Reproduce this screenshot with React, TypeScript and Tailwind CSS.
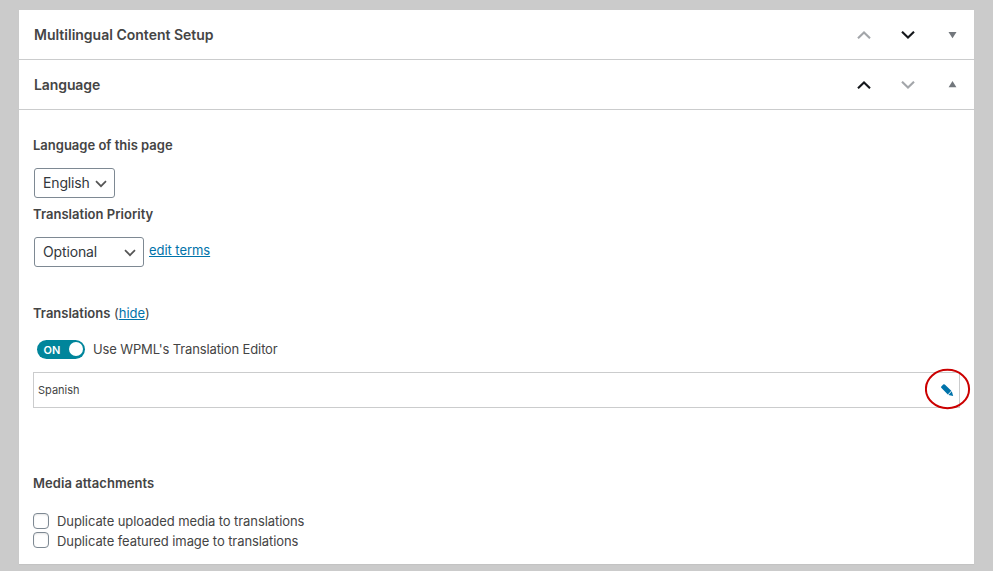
import type { ReactNode } from "react";

function Chevron({ up, active }: { up?: boolean; active?: boolean }) {
  return (
    <svg width="14" height="8" viewBox="0 0 14 8" fill="none" stroke={active ? "#15181c" : "#a3a6aa"} strokeWidth="2.1">
      <path d={up ? "M1 7.3 7 1.5l6 5.8" : "M1 0.7 7 6.5l6-5.8"} />
    </svg>
  );
}

function PanelHeader({ title, upActive, open }: { title: ReactNode; upActive?: boolean; open?: boolean }) {
  return (
    <div className="flex h-[50px] shrink-0 items-center border-b border-[#cbcccd] pl-[15px] pr-[17px]">
      <h2 className="flex-1 text-[14px] font-semibold leading-5 text-[#454545]">{title}</h2>
      <div className="flex items-center">
        <Chevron up active={upActive} />
        <span className="ml-[30px] flex">
          <Chevron active={!upActive} />
        </span>
        <svg className="ml-[33px]" width="9" height="8" viewBox="0 0 9 8" fill="#72777c">
          <path d={open ? "M4.5 0 8.4 6.2H0.6z" : "M0.5 1h8L4.5 7.2z"} />
        </svg>
      </div>
    </div>
  );
}

function Select({ label, className }: { label: string; className: string }) {
  return (
    <button
      className={`flex h-[30px] items-center justify-between rounded-[3px] border border-[#7e8993] bg-white pl-2 pr-[7px] text-[14px] leading-5 tracking-[-0.14px] text-[#32373c] ${className}`}
    >
      <span>{label}</span>
      <svg className="mt-px" width="12" height="8" viewBox="0 0 12 8" fill="none" stroke="#555" strokeWidth="1.7">
        <path d="M1 1.2 6 6.2l5-5" />
      </svg>
    </button>
  );
}

function CheckRow({ label, className }: { label: ReactNode; className: string }) {
  return (
    <label className="flex h-5 items-start">
      <span className={`size-4 shrink-0 rounded-[4px] border border-[#7e8993] bg-white shadow-[inset_0_1px_2px_rgba(0,0,0,0.1)] ${className}`} />
      <span className="ml-2 leading-5 tracking-[-0.08px]">{label}</span>
    </label>
  );
}

export default function App() {
  return (
    <div className="h-[571px] w-[993px] overflow-hidden bg-[#cbcbcb] pl-[19px] pt-[10px] font-['Inter','Liberation_Sans',sans-serif] text-[13px] leading-5 text-[#444]">
      <div className="flex h-[554px] w-[955px] flex-col bg-white shadow-[0_1px_1px_rgba(0,0,0,0.04)]">
        <PanelHeader title="Multilingual Content Setup" />
        <PanelHeader title={<span className="tracking-[-0.1px]">Language</span>} upActive open />
        <div className="flex flex-col items-start pl-[14px] pr-[14px] pt-[25px]">
          <h3 className="font-semibold">Language of this page</h3>
          <Select label="English" className="ml-px mt-[13px] w-[81px]" />
          <h3 className="mt-[6px] font-semibold tracking-[0.03px]">Translation Priority</h3>
          <div className="ml-px mt-[13px] flex h-[30px]">
            <Select label="Optional" className="w-[110px]" />
            <a className="ml-[5px] mt-[3px] tracking-[-0.05px] text-[#0073aa] underline">edit terms</a>
          </div>
          <p className="mt-[36px]">
            <b className="font-semibold">Translations</b> (<a className="text-[#0073aa] underline">hide</a>)
          </p>
          <div className="ml-[4px] mt-[16px] flex h-5 items-center">
            <span className="flex h-[19px] w-[48px] items-center justify-between rounded-full bg-[#00859b] pl-[6.5px] pr-[2px] text-[11px] font-semibold text-white">
              <span className="mt-px">ON</span>
              <span className="size-[14px] rounded-full bg-white" />
            </span>
            <span className="ml-2 tracking-[-0.13px]">Use WPML's Translation Editor</span>
          </div>
          <div className="relative mt-[13px] flex h-[36px] w-full items-center justify-between border border-[#cbcccd] pl-1 pr-[5px] text-[11px]">
            <span>Spanish</span>
            <svg width="13" height="13" viewBox="0 0 13 13" fill="#0073aa">
              <path d="M0.3 2.5 2.2 0.5Q3 -0.1 3.8 0.6L10.3 6.7 6.8 10.4 0.5 4.1Q-0.2 3.3 0.3 2.5ZM10.8 7.3 12.2 12.1 7.4 10.9Z" />
            </svg>
            <svg className="absolute right-[-12px] top-[-5px]" width="46" height="42" viewBox="0 0 46 42" fill="none" stroke="#cb0000" strokeWidth="2">
              <ellipse cx="22.5" cy="21" rx="21.6" ry="19.2" />
            </svg>
          </div>
          <h3 className="mt-[65px] font-semibold tracking-[0.06px]">Media attachments</h3>
          <div className="mt-[18px]">
            <CheckRow label="Duplicate uploaded media to translations" className="mt-[2px]" />
            <CheckRow label="Duplicate featured image to translations" className="mt-px" />
          </div>
        </div>
      </div>
    </div>
  );
}
